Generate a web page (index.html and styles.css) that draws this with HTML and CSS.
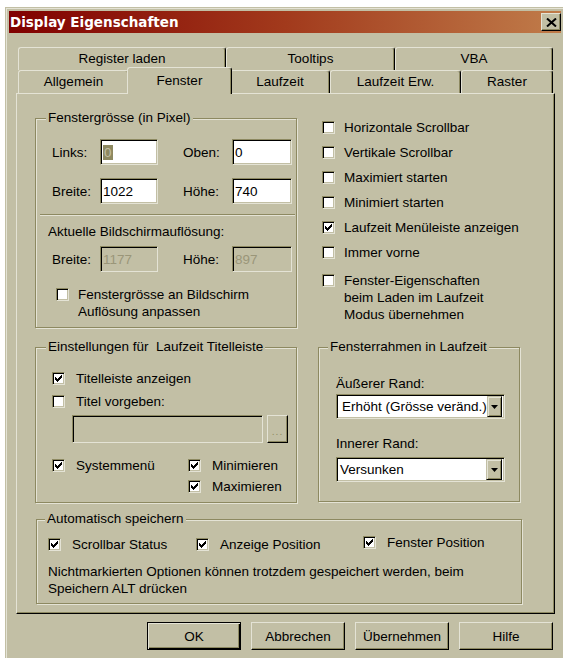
FILE: index.html
```html
<!DOCTYPE html>
<html lang="de">
<head>
<meta charset="utf-8">
<title>Display Eigenschaften</title>
<link rel="stylesheet" href="styles.css">
</head>
<body>
<div class="window">
  <div class="titlebar">
    <span class="title">Display Eigenschaften</span>
    <span class="close"><svg width="11" height="9" viewBox="0 0 11 9"><path d="M1 0.5L10 8.5M10 0.5L1 8.5" stroke="#000" stroke-width="2"/></svg></span>
  </div>
  <div class="client">
    <div class="tabs">
      <div class="tabrow">
        <div class="tab t-register">Register laden</div>
        <div class="tab t-tooltips">Tooltips</div>
        <div class="tab t-vba">VBA</div>
      </div>
      <div class="tabrow">
        <div class="tab t-allgemein">Allgemein</div>
        <div class="tab t-fenster active">Fenster</div>
        <div class="tab t-laufzeit">Laufzeit</div>
        <div class="tab t-erw">Laufzeit Erw.</div>
        <div class="tab t-raster">Raster</div>
      </div>
    </div>

    <div class="panel">
      <div class="top">
        <div class="group g-size">
          <div class="legend">Fenstergrösse (in Pixel)</div>
          <div class="field-row first">
            <span class="lbl lbl-a">Links:</span>
            <span class="input w-a"><span class="selected">0</span></span>
            <span class="lbl lbl-b">Oben:</span>
            <span class="input w-b">0</span>
          </div>
          <div class="field-row">
            <span class="lbl lbl-a">Breite:</span>
            <span class="input w-a">1022</span>
            <span class="lbl lbl-b">Höhe:</span>
            <span class="input w-b">740</span>
          </div>
          <div class="etched"></div>
          <div class="caption">Aktuelle Bildschirmauflösung:</div>
          <div class="field-row disabled-row">
            <span class="lbl lbl-a">Breite:</span>
            <span class="input disabled w-a">1177</span>
            <span class="lbl lbl-b">Höhe:</span>
            <span class="input disabled w-b">897</span>
          </div>
          <div class="chk fit">
            <span class="cb"></span>
            <span class="chk-text">Fenstergrösse an Bildschirm<br>Auflösung anpassen</span>
          </div>
        </div>

        <div class="options">
          <div class="chk"><span class="cb"></span><span class="chk-text">Horizontale Scrollbar</span></div>
          <div class="chk"><span class="cb"></span><span class="chk-text">Vertikale Scrollbar</span></div>
          <div class="chk"><span class="cb"></span><span class="chk-text">Maximiert starten</span></div>
          <div class="chk"><span class="cb"></span><span class="chk-text">Minimiert starten</span></div>
          <div class="chk"><span class="cb"><svg width="7" height="7" viewBox="0 0 7 7"><path d="M0 2h1v1h1v1h1v-1h1v-1h1v-1h1v-1h1V3h-1v1h-1v1h-1v1h-1v1H2V6H1V5H0z"/></svg></span><span class="chk-text">Laufzeit Menüleiste anzeigen</span></div>
          <div class="chk"><span class="cb"></span><span class="chk-text">Immer vorne</span></div>
          <div class="chk multi"><span class="cb"></span><span class="chk-text">Fenster-Eigenschaften<br>beim Laden im Laufzeit<br>Modus übernehmen</span></div>
        </div>
      </div>

      <div class="mid">
        <div class="group g-title">
          <div class="legend">Einstellungen für&nbsp; Laufzeit Titelleiste</div>
          <div class="chk c-show"><span class="cb"><svg width="7" height="7" viewBox="0 0 7 7"><path d="M0 2h1v1h1v1h1v-1h1v-1h1v-1h1v-1h1V3h-1v1h-1v1h-1v1h-1v1H2V6H1V5H0z"/></svg></span><span class="chk-text">Titelleiste anzeigen</span></div>
          <div class="chk c-preset"><span class="cb"></span><span class="chk-text">Titel vorgeben:</span></div>
          <div class="title-field">
            <span class="input disabled w-title"></span>
            <span class="dots-btn"><span class="dots">...</span></span>
          </div>
          <div class="sys-grid">
            <div class="chk"><span class="cb"><svg width="7" height="7" viewBox="0 0 7 7"><path d="M0 2h1v1h1v1h1v-1h1v-1h1v-1h1v-1h1V3h-1v1h-1v1h-1v1h-1v1H2V6H1V5H0z"/></svg></span><span class="chk-text">Systemmenü</span></div>
            <div class="chk"><span class="cb"><svg width="7" height="7" viewBox="0 0 7 7"><path d="M0 2h1v1h1v1h1v-1h1v-1h1v-1h1v-1h1V3h-1v1h-1v1h-1v1h-1v1H2V6H1V5H0z"/></svg></span><span class="chk-text">Minimieren</span></div>
            <div class="chk second"><span class="cb"><svg width="7" height="7" viewBox="0 0 7 7"><path d="M0 2h1v1h1v1h1v-1h1v-1h1v-1h1v-1h1V3h-1v1h-1v1h-1v1h-1v1H2V6H1V5H0z"/></svg></span><span class="chk-text">Maximieren</span></div>
          </div>
        </div>

        <div class="group g-frame">
          <div class="legend">Fensterrahmen in Laufzeit</div>
          <div class="frame-label outer">Äußerer Rand:</div>
          <div class="select first-select"><span class="select-text">Erhöht (Grösse veränd.)</span><span class="drop"><svg width="7" height="4" viewBox="0 0 7 4"><path d="M0 0h7L3.5 4z"/></svg></span></div>
          <div class="frame-label inner">Innerer Rand:</div>
          <div class="select second-select"><span class="select-text">Versunken</span><span class="drop"><svg width="7" height="4" viewBox="0 0 7 4"><path d="M0 0h7L3.5 4z"/></svg></span></div>
        </div>
      </div>

      <div class="group g-save">
        <div class="legend">Automatisch speichern</div>
        <div class="save-row">
          <div class="chk s1"><span class="cb"><svg width="7" height="7" viewBox="0 0 7 7"><path d="M0 2h1v1h1v1h1v-1h1v-1h1v-1h1v-1h1V3h-1v1h-1v1h-1v1h-1v1H2V6H1V5H0z"/></svg></span><span class="chk-text">Scrollbar Status</span></div>
          <div class="chk s2"><span class="cb"><svg width="7" height="7" viewBox="0 0 7 7"><path d="M0 2h1v1h1v1h1v-1h1v-1h1v-1h1v-1h1V3h-1v1h-1v1h-1v1h-1v1H2V6H1V5H0z"/></svg></span><span class="chk-text">Anzeige Position</span></div>
          <div class="chk s3"><span class="cb"><svg width="7" height="7" viewBox="0 0 7 7"><path d="M0 2h1v1h1v1h1v-1h1v-1h1v-1h1v-1h1V3h-1v1h-1v1h-1v1h-1v1H2V6H1V5H0z"/></svg></span><span class="chk-text">Fenster Position</span></div>
        </div>
        <p class="note">Nichtmarkierten Optionen können trotzdem gespeichert werden, beim<br>Speichern ALT drücken</p>
      </div>
    </div>

    <div class="buttons">
      <span class="btn default">OK</span>
      <span class="btn">Abbrechen</span>
      <span class="btn">Übernehmen</span>
      <span class="btn">Hilfe</span>
    </div>
  </div>
</div>
</body>
</html>
```

FILE: styles.css
```css
:root {
  --face: #c2bfa5;
  --hi: #e4e3d5;
  --shadow: #8d8961;
  --dark: #000000;
  --gray-text: #9a9679;
}

html, body {
  margin: 0;
  padding: 0;
  background: #ffffff;
  overflow: hidden;
}

body {
  font-family: "Liberation Sans", Arial, sans-serif;
  font-size: 13.5px;
  color: #000;
}

/* ---- window frame ---- */
.window {
  box-sizing: border-box;
  width: 560px;
  height: 660px;
  margin: 7px 0 0 5px;
  padding: 3px;
  background: var(--face);
  border: 1px solid;
  border-color: var(--face) var(--dark) var(--dark) var(--face);
  box-shadow: inset 1px 1px 0 var(--hi), inset -1px -1px 0 var(--shadow);
}

.titlebar {
  height: 22px;
  display: flex;
  align-items: center;
  justify-content: space-between;
  background: linear-gradient(to right, #800000 0%, #a23a1c 50%, #c07c4a 100%);
}

.title {
  font-family: "DejaVu Sans", Verdana, sans-serif;
  font-weight: bold;
  font-size: 13.5px;
  color: #ffffff;
  padding-left: 1px;
  line-height: 22px;
}

.close {
  box-sizing: border-box;
  width: 20px;
  height: 18px;
  display: flex;
  align-items: center;
  justify-content: center;
  background: var(--face);
  border: 1px solid;
  border-color: var(--hi) var(--dark) var(--dark) var(--hi);
  box-shadow: inset -1px -1px 0 var(--shadow);
}

.client {
  padding-left: 7px;
}

/* ---- tabs ---- */
.tabs {
  margin-top: 14px;
  margin-left: 2px;
  width: 535px;
}

.tabrow {
  display: flex;
}

.tab {
  box-sizing: border-box;
  height: 23px;
  line-height: 21px;
  text-align: center;
  background: var(--face);
  border-top: 1px solid var(--hi);
  border-left: 1px solid var(--hi);
  border-right: 1px solid var(--dark);
  border-radius: 3px 3px 0 0;
  box-shadow: inset -1px 0 0 var(--shadow);
}

.t-register { width: 208px; }
.t-tooltips { width: 169px; }
.t-vba { width: 158px; }
.t-allgemein { width: 111px; }
.t-fenster { width: 101px; }
.t-laufzeit { width: 100px; }
.t-erw { width: 131px; }
.t-raster { width: 92px; }

.tab.active {
  position: relative;
  z-index: 1;
  width: 105px;
  height: 27px;
  margin: -3px -2px -1px -2px;
  line-height: 25px;
}

/* ---- tab page ---- */
.panel {
  box-sizing: border-box;
  width: 539px;
  height: 521px;
  background: var(--face);
  border-top: 1px solid var(--hi);
  border-left: 1px solid var(--hi);
  border-right: 1px solid var(--dark);
  border-bottom: 1px solid var(--dark);
  box-shadow: inset -1px -1px 0 var(--shadow);
}

.top {
  display: flex;
  align-items: flex-start;
  margin: 24px 0 0 18px;
}

.mid {
  display: flex;
  align-items: flex-start;
  margin: 19px 0 0 18px;
}

/* etched group box */
.group {
  box-sizing: border-box;
  border: 1px solid var(--shadow);
  box-shadow: inset 1px 1px 0 var(--hi), 1px 1px 0 var(--hi);
}

.legend {
  width: fit-content;
  height: 16px;
  line-height: 16px;
  margin: -9px 0 0 10px;
  padding: 0 2px;
  background: var(--face);
  white-space: nowrap;
}

.g-size { width: 262px; height: 210px; }
.g-title { width: 262px; height: 156px; }
.g-frame { width: 202px; height: 155px; margin-left: 21px; }
.g-frame .legend { margin-left: 9px; }
.g-save { width: 486px; height: 85px; margin: 16px 0 0 19px; }
.g-save .legend { margin-left: 8px; }

/* text fields */
.field-row {
  display: flex;
  align-items: center;
  margin: 13px 0 0 16px;
  height: 26px;
}

.field-row.disabled-row { margin-top: 6px; }

.lbl { white-space: nowrap; }
.lbl-a { width: 48px; }
.lbl-b { width: 49px; margin-left: 25px; }

.input {
  box-sizing: border-box;
  height: 26px;
  display: flex;
  align-items: center;
  padding-left: 2px;
  background: #ffffff;
  border: 1px solid;
  border-color: var(--shadow) var(--hi) var(--hi) var(--shadow);
  box-shadow: inset 1px 1px 0 var(--dark), inset -1px -1px 0 var(--face);
  white-space: nowrap;
}

.input.disabled {
  background: var(--face);
  color: var(--gray-text);
}

.w-a { width: 58px; }
.w-b { width: 60px; }

.selected {
  background: var(--shadow);
  color: var(--face);
  padding: 0 1px;
  line-height: 15px;
}

.etched {
  width: 255px;
  height: 0;
  margin: 10px 0 0 4px;
  border-top: 1px solid var(--shadow);
  border-bottom: 1px solid var(--hi);
}

.caption {
  margin: 8px 0 0 12px;
  line-height: 16px;
}

/* check boxes */
.chk {
  display: flex;
  align-items: flex-start;
  line-height: 17px;
  white-space: nowrap;
}

.cb {
  box-sizing: border-box;
  flex: none;
  width: 13px;
  height: 13px;
  margin-top: 2px;
  display: flex;
  align-items: center;
  justify-content: center;
  background: #ffffff;
  border: 1px solid;
  border-color: var(--shadow) var(--hi) var(--hi) var(--shadow);
  box-shadow: inset 1px 1px 0 var(--dark), inset -1px -1px 0 var(--face);
}

.cb svg { display: block; }

.chk-text { margin-left: 9px; }

.chk.fit { margin: 14px 0 0 20px; }

.options {
  margin: 1px 0 0 25px;
  display: flex;
  flex-direction: column;
  gap: 8px;
}

.options .chk.multi { margin-top: 3px; }

.g-title .chk { margin-left: 16px; }
.g-title .chk-text { margin-left: 11px; }
.c-show { margin-top: 15px; }
.c-preset { margin-top: 6px; }

.title-field {
  display: flex;
  margin: 5px 0 0 36px;
}

.w-title { width: 191px; height: 28px; }

.dots-btn {
  box-sizing: border-box;
  width: 21px;
  height: 28px;
  margin-left: 4px;
  display: flex;
  flex-direction: column;
  justify-content: flex-end;
  align-items: center;
  padding-bottom: 5px;
  background: var(--face);
  border: 1px solid;
  border-color: var(--hi) var(--dark) var(--dark) var(--hi);
  box-shadow: inset -1px -1px 0 var(--shadow);
}

.dots {
  display: block;
  font-family: "DejaVu Sans", sans-serif;
  font-size: 9px;
  line-height: 9px;
  letter-spacing: 1px;
  color: var(--shadow);
}

.sys-grid {
  display: grid;
  grid-template-columns: 136px auto;
  row-gap: 4px;
  margin-top: 14px;
}

.sys-grid .chk { margin-left: 16px; }
.sys-grid .chk.second { grid-column: 2; }

/* combo boxes */
.frame-label {
  margin-left: 17px;
  line-height: 17px;
}

.frame-label.outer { margin-top: 20px; }
.frame-label.inner { margin-top: 16px; }

.select {
  box-sizing: border-box;
  width: 169px;
  height: 25px;
  margin-left: 17px;
  display: flex;
  align-items: center;
  justify-content: space-between;
  background: #ffffff;
  border: 1px solid;
  border-color: var(--shadow) var(--hi) var(--hi) var(--shadow);
  box-shadow: inset 1px 1px 0 var(--dark), inset -1px -1px 0 var(--face);
  padding: 2px;
}

.first-select { margin-top: 2px; }
.second-select { margin-top: 5px; }

.first-select .select-text { padding-left: 3px; }
.second-select .select-text { padding-left: 1px; }

.select-text { white-space: nowrap; }

.drop {
  box-sizing: border-box;
  width: 16px;
  height: 21px;
  display: flex;
  align-items: center;
  justify-content: center;
  background: var(--face);
  border: 1px solid;
  border-color: var(--face) var(--dark) var(--dark) var(--face);
  box-shadow: inset 1px 1px 0 var(--hi), inset -1px -1px 0 var(--shadow);
}

.drop svg { display: block; }

/* auto-save group */
.save-row {
  display: flex;
  margin: 9px 0 0 11px;
}

.save-row .chk-text { margin-left: 11px; }
.save-row .s1 { width: 148px; }
.save-row .s2 { width: 167px; }
.save-row .s3 { margin-top: -2px; }

.note {
  margin: 10px 0 0 11px;
  line-height: 17px;
}

/* dialog buttons */
.buttons {
  display: flex;
  justify-content: flex-end;
  gap: 10px;
  width: 537px;
  margin-top: 8px;
}

.btn {
  box-sizing: border-box;
  width: 94px;
  height: 28px;
  display: flex;
  align-items: center;
  justify-content: center;
  background: var(--face);
  border: 1px solid;
  border-color: var(--hi) var(--dark) var(--dark) var(--hi);
  box-shadow: inset -1px -1px 0 var(--shadow);
}

.btn.default {
  border: 1px solid var(--dark);
  box-shadow: inset 1px 1px 0 var(--hi), inset -1px -1px 0 var(--dark), inset -2px -2px 0 var(--shadow);
}
```
